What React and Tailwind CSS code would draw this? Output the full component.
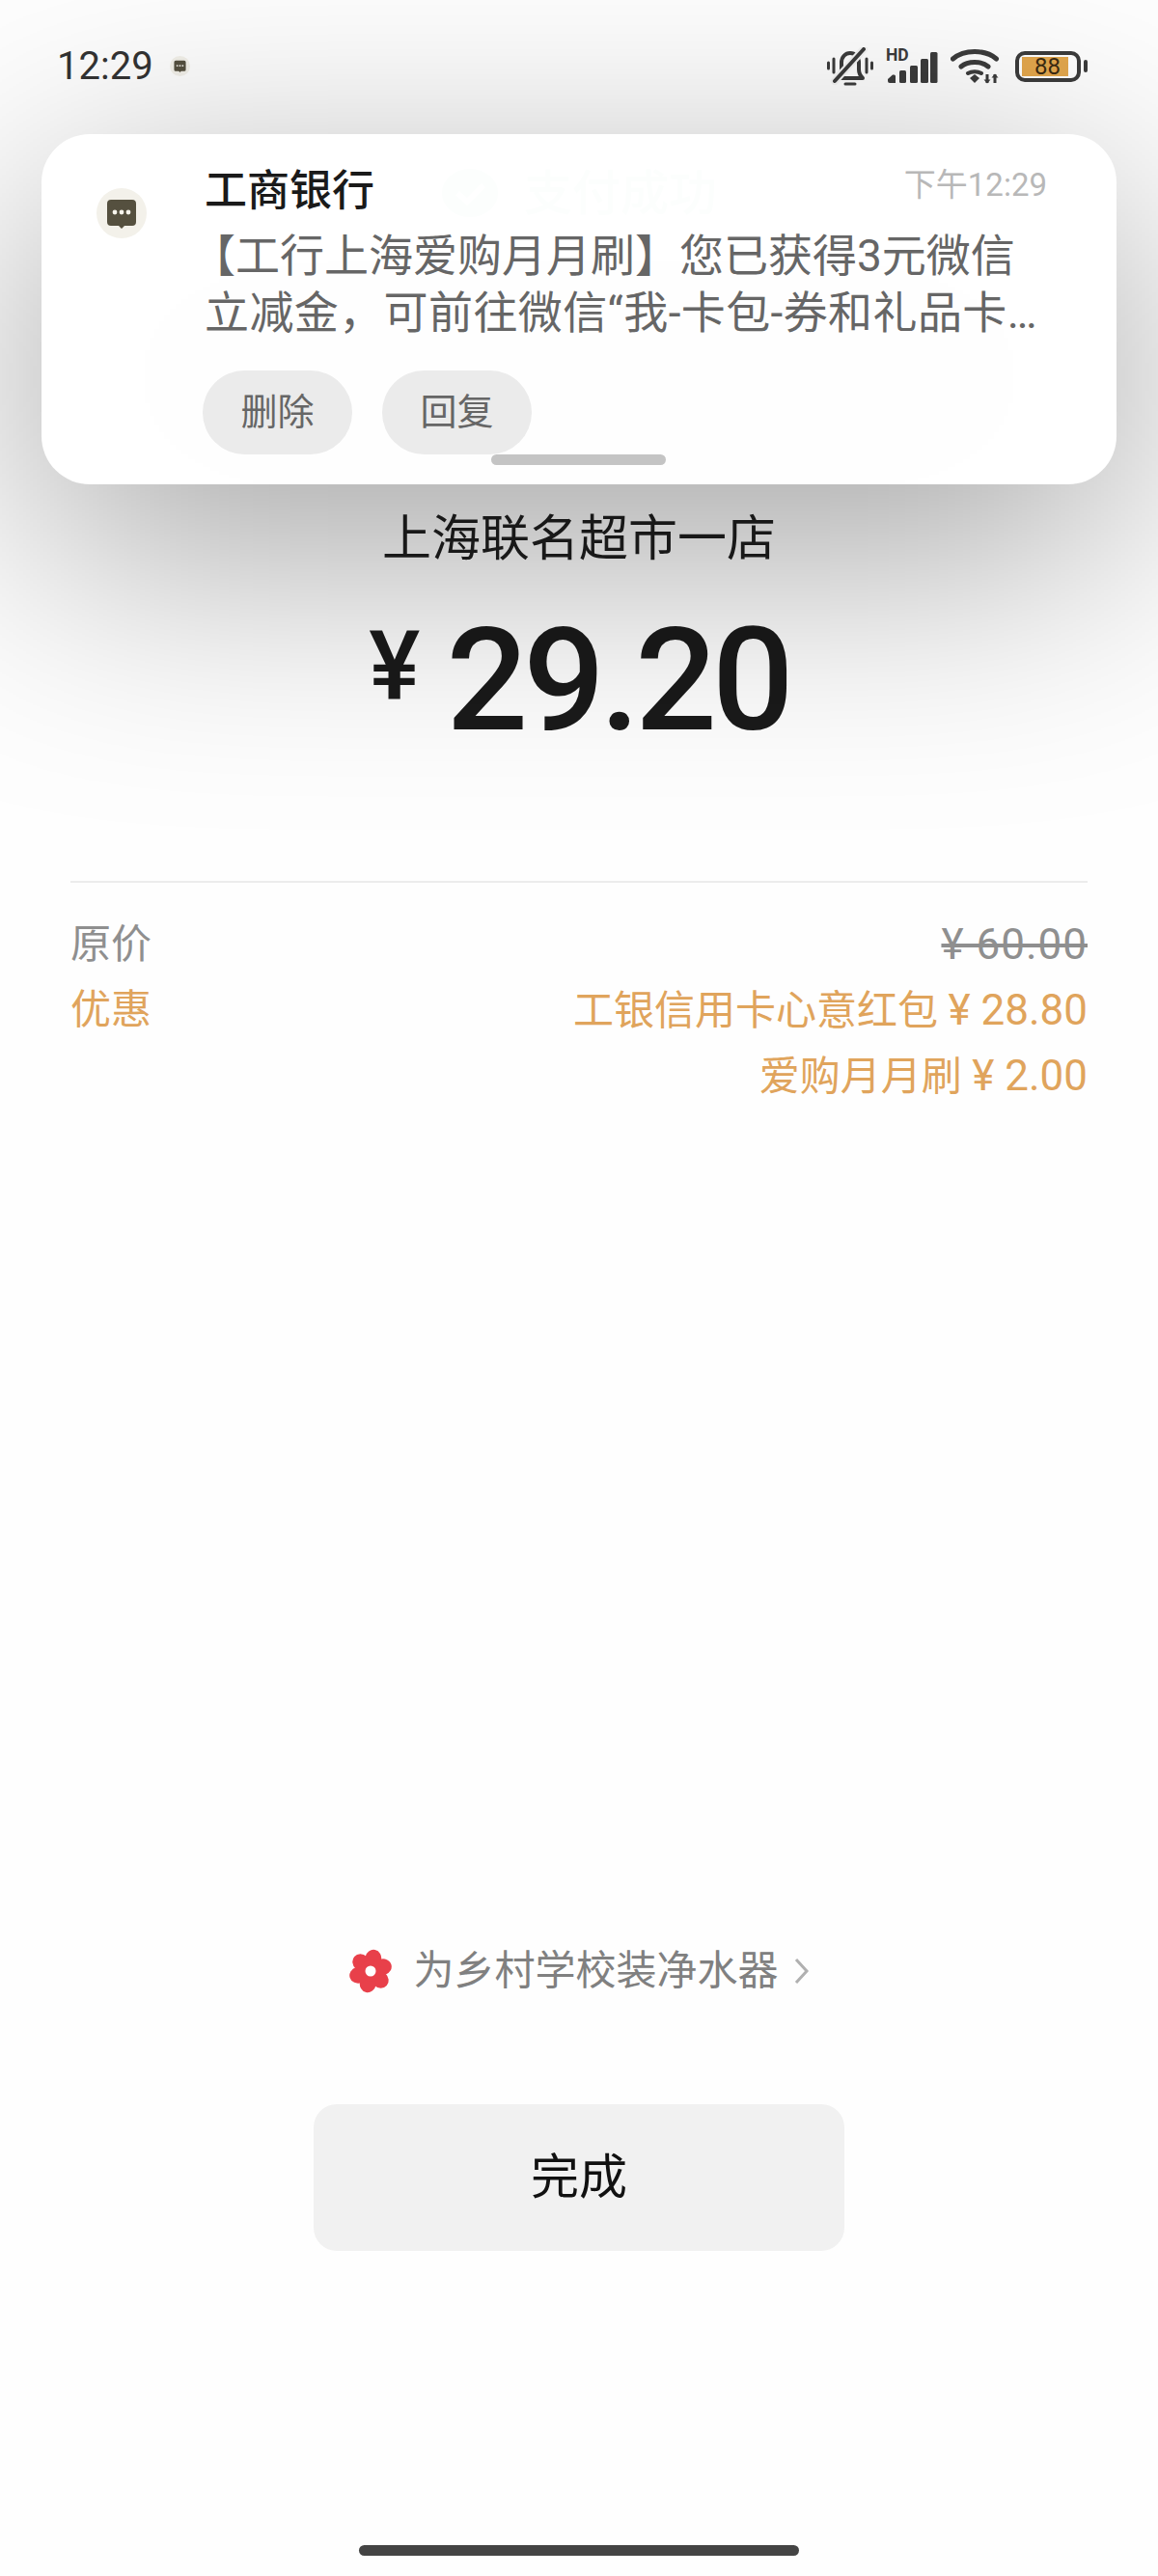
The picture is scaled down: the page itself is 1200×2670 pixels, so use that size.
// App.jsx
const FONT = "font-['Roboto','Noto_Sans_CJK_SC',sans-serif]";

function MessageBadge({ size }) {
  // round beige badge with the dark sms bubble
  return (
    <svg width={size} height={size} viewBox="0 0 52 52">
      <circle cx="26" cy="26" r="26" fill="#f3f1ea" />
      <path d="M15 12h22a4 4 0 0 1 4 4v19a4 4 0 0 1-4 4H29l-3 3-3-3h-8a4 4 0 0 1-4-4V16a4 4 0 0 1 4-4z" fill="#55503f" />
      <circle cx="19" cy="25" r="2.4" fill="#f6f4ec" />
      <circle cx="26" cy="25" r="2.4" fill="#f6f4ec" />
      <circle cx="33" cy="25" r="2.4" fill="#f6f4ec" />
    </svg>
  );
}

function BellOff() {
  return (
    <svg width="48" height="40" viewBox="0 0 48 40" fill="none" stroke="#3c3c3c" strokeLinecap="round">
      <path d="M1.5 16v6M7 12v14M46.5 16v6M41 12v14" strokeWidth="3" />
      <path d="M11 32h26c-3-3-4-6-4-9v-7c0-6-4-10-9-10s-9 4-9 10v7c0 3-1 6-4 9z" strokeWidth="4" strokeLinejoin="round" />
      <path d="M19 38h10" strokeWidth="3" />
      <path d="M8 35 38 2" stroke="#f4f4f4" strokeWidth="8" />
      <path d="M8 35 38 2" strokeWidth="4" />
    </svg>
  );
}

function Signal() {
  return (
    <div className="relative w-[54px] h-[36px]">
      <span className="absolute left-0 top-[-1px] text-[17.5px] leading-[15px] font-bold text-[#3c3c3c] font-['Roboto',sans-serif]">HD</span>
      <svg className="absolute left-0 top-0" width="54" height="36" viewBox="0 0 54 36" fill="#3c3c3c">
        <path d="M2 31l5-4.5h1.500a1.500 1.500 0 0 1 1.500 1.500v7H4a2 2 0 0 1-2-2z" />
        <rect x="14" y="22" width="7" height="13" rx="1.500" />
        <rect x="25" y="17" width="8" height="18" rx="1.500" />
        <rect x="36" y="10" width="8" height="25" rx="1.500" />
        <rect x="46" y="3" width="7.500" height="32" rx="1.500" />
      </svg>
    </div>
  );
}

function Wifi() {
  return (
    <svg width="51" height="36" viewBox="0 0 51 36" fill="none" stroke="#3c3c3c" strokeLinecap="round">
      <path d="M2.500 10C14 0 36 0 47.500 10" strokeWidth="5" />
      <path d="M11 18c7-6 21-6 28 0" strokeWidth="5" />
      <path d="M18 25c4-2.500 10-2.500 14 0" strokeWidth="4" />
      <path d="M20 30l5-4 5 4-5 5z" fill="#3c3c3c" stroke="none" />
      <path d="M38 26v9M46 26v9" strokeWidth="3" strokeLinecap="butt" />
      <path d="M34.500 31.500 38 35.500l3.500-4zM42.500 29.500 46 25.500l3.500 4z" fill="#3c3c3c" stroke="none" />
    </svg>
  );
}

function Battery() {
  return (
    <div className="flex items-center gap-[3px]">
      <div className="w-[68px] h-[32px] border-[4px] border-[#3c3c3c] rounded-[10px] bg-white flex items-center pl-[3px]">
        <div className="w-[48px] h-[20px] bg-[#e3a74d] flex items-center justify-center text-[24px] leading-none text-[#3a2a12] pl-[5px]">88</div>
      </div>
      <div className="w-[4px] h-[13px] bg-[#3c3c3c] rounded-full" />
    </div>
  );
}

function StatusBar() {
  return (
    <div className="flex items-center justify-between h-[139px] pl-[59px] pr-[73px] pb-[2px]">
      <div className="flex items-center gap-[17px]">
        <span className="text-[40px] leading-none text-[#333]">12:29</span>
        <MessageBadge size={21} />
      </div>
      <div className="flex items-center gap-[13px]">
        <BellOff />
        <Signal />
        <div className="mr-[3px]">
          <Wifi />
        </div>
        <Battery />
      </div>
    </div>
  );
}

function Notification() {
  return (
    <>
      <div className="absolute left-[43px] top-[209px] w-[1114px] h-[363px] bg-black/36 blur-[130px]" />
      <div className="absolute left-[43px] top-[139px] w-[1114px] h-[363px] rounded-[50px] bg-white/99">
        <div className="flex pt-[34px] pl-[57px] pr-[72px]">
          <div className="pt-[22px] mr-[60px] shrink-0">
            <MessageBadge size={52} />
          </div>
          <div className="flex-1 min-w-0">
            <div className="flex items-center justify-between">
              <span className="text-[44px] leading-[50px] font-medium text-[#1a1a1a]">工商银行</span>
              <span className="text-[33px] leading-[40px] text-[#b8b8b8] -translate-y-[6px]">下午12:29</span>
            </div>
            <p className="mt-[13px] text-[46px] leading-[59px] text-[#666] whitespace-nowrap">
              <span className="-ml-[14px]">【工行上海爱购月月刷】您已获得3元微信</span>
              <br />
              <span className="tracking-[0.4px]">立减金，可前往微信“我-卡包-券和礼品卡…</span>
            </p>
            <div className="flex gap-[31px] mt-[30px] -ml-[2px]">
              <button className="w-[155px] h-[87px] rounded-full bg-[#ebebeb] text-[38px] text-[#666]">删除</button>
              <button className="w-[155px] h-[87px] rounded-full bg-[#ebebeb] text-[38px] text-[#666]">回复</button>
            </div>
          </div>
        </div>
        <div className="absolute left-[466px] top-[332px] w-[181px] h-[11px] rounded-full bg-[#c4c4c4]" />
      </div>
    </>
  );
}

function Flower() {
  const petals = [0, 60, 120, 180, 240, 300];
  return (
    <svg width="46" height="46" viewBox="0 0 46 46">
      {petals.map((a) => (
        <ellipse key={a} cx="23" cy="10" rx="8.500" ry="9.500" fill="#e8404a" transform={`rotate(${a + 12} 23 23)`} />
      ))}
      <circle cx="23" cy="23" r="11" fill="#e8404a" />
      <circle cx="23" cy="23" r="5.500" fill="#fff" />
    </svg>
  );
}

function DetailRow({ label, value, className }) {
  return (
    <div className={`flex justify-between h-[68px] items-center text-[42px] leading-none ${className}`}>
      <span>{label}</span>
      <span>{value}</span>
    </div>
  );
}

export default function App() {
  return (
    <div className={`relative w-[1200px] h-[2670px] overflow-hidden bg-[#fefefe] flex flex-col ${FONT}`}>
      <StatusBar />

      {/* under the notification */}
      <div className="flex items-center justify-center gap-[26px] h-[84px] mt-[20px] text-[#07c160]">
        <svg width="60" height="52" viewBox="0 0 60 52">
          <ellipse cx="30" cy="25" rx="29" ry="25" fill="#07c160" />
          <path d="M17 25l10 9 17-17" fill="none" stroke="#fff" strokeWidth="6" />
        </svg>
        <span className="text-[50px] font-medium">支付成功</span>
      </div>

      <div className="mt-[286px] text-center text-[51px] leading-[60px] text-[#1f1f1f]">上海联名超市一店</div>

      <div className="mt-[51px] flex items-start justify-center gap-[27px] h-[130px] text-[#1a1a1a] font-medium">
        <span className="text-[100px] leading-[100px] mt-[1px]">¥</span>
        <span className="text-[149px] leading-[130px] tracking-[-5px]">29.20</span>
      </div>

      <div className="mx-[73px] mt-[143px] pt-[30px] border-t-2 border-[#ececec]">
        <DetailRow label="原价" value={<s className="text-[44px] tracking-[1px]">¥ 60.00</s>} className="text-[#8f8f8f]" />
        <DetailRow label="优惠" value={<>工银信用卡心意红包 <span className="text-[44px]">¥ 28.80</span></>} className="text-[#e0a45c]" />
        <DetailRow value={<>爱购月月刷 <span className="text-[44px]">¥ 2.00</span></>} className="text-[#e0a45c]" />
      </div>

      <div className="mt-auto flex flex-col items-center">
        <div className="flex items-center h-[46px]">
          <Flower />
          <span className="ml-[21px] text-[42px] leading-none text-[#808080]">为乡村学校装净水器</span>
          <svg className="ml-[16px]" width="16" height="28" viewBox="0 0 16 28" fill="none" stroke="#b0b0b0" strokeWidth="3">
            <path d="M2 2l11 12L2 26" />
          </svg>
        </div>
        <button className="mt-[115px] w-[550px] h-[152px] rounded-[24px] bg-[#f1f1f1] text-[50px] text-[#111]">完成</button>
        <div className="mt-[305px] mb-[21px] w-[456px] h-[11px] rounded-full bg-[#444]" />
      </div>

      <Notification />
    </div>
  );
}
